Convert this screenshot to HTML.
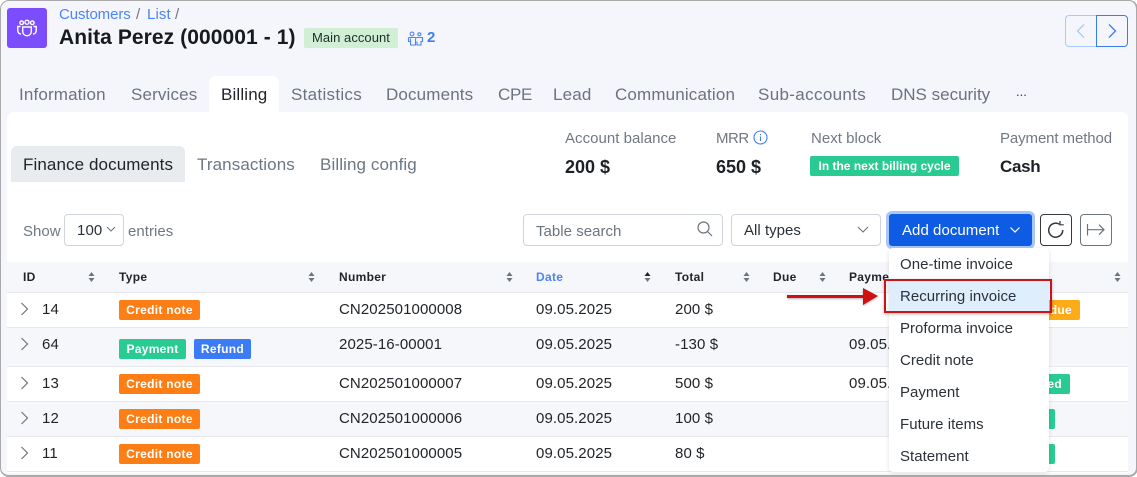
<!DOCTYPE html>
<html><head><meta charset="utf-8"><style>
html,body{margin:0;padding:0;background:#fff}
body{width:1137px;height:476px;overflow:hidden;position:relative;font-family:"Liberation Sans",sans-serif;color:#212529}
#w{position:absolute;left:0;top:0;width:1135px;height:474px;background:#f5f6fb;border:1px solid #a9a9a9;border-width:1px 2px 2px 1px;border-radius:9px;overflow:hidden}
.a{position:absolute}
.t{position:absolute;white-space:nowrap;font-size:15px;line-height:18px;letter-spacing:.1px}
.tab{font-size:17px;letter-spacing:.15px;color:#6b7280;line-height:20px}
.sub{font-size:17px;letter-spacing:.1px;color:#6b7785;line-height:20px}
.lbl{color:#6f7883;font-size:15px;letter-spacing:.03px}
.val{font-size:18px;font-weight:bold;color:#1d2126;letter-spacing:0;line-height:20px}
.th{font-size:12px;font-weight:bold;letter-spacing:.3px;color:#212529}
.b{position:absolute;height:20px;line-height:20px;border-radius:2px;color:#fff;font-size:12px;font-weight:bold;text-align:center;white-space:nowrap;letter-spacing:.3px}
.o{background:#fd7e14;width:81px;left:119px}
.g{background:#2acb92}
.row{position:absolute;left:7px;width:1121px;border-bottom:1px solid #e6e8ee}
.m{position:absolute;left:900px;font-size:15px;letter-spacing:.03px;white-space:nowrap;line-height:18px;color:#2b3138}
svg{position:absolute;overflow:visible}
</style></head><body>
<div id="w"></div>

<!-- logo -->
<div class="a" style="left:7px;top:8px;width:40px;height:40px;background:#7c4dff;border-radius:3px"></div>
<svg style="left:0;top:0" width="60" height="60" fill="none" stroke="#fff" stroke-width="1.400"><circle cx="21.700" cy="22.800" r="1.800"/><circle cx="27" cy="22.200" r="2"/><circle cx="32.300" cy="22.800" r="1.800"/><path d="M22.700 27h8.600v4.500c0 2.500-2 4-4.300 4.300-2.300-.3-4.300-1.800-4.300-4.300z"/><path d="M20.500 26.500h-2.700v4c0 2 1 3.200 3.200 3.700M33.500 26.500h2.700v4c0 2-1 3.200-3.200 3.700"/></svg>

<div class="t" style="left:59px;top:6px;color:#4d84f5;letter-spacing:-.1px">Customers</div>
<div class="t" style="left:136px;top:6px;color:#6c757d">/</div>
<div class="t" style="left:147px;top:6px;color:#4d84f5">List</div>
<div class="t" style="left:175px;top:6px;color:#6c757d">/</div>
<div class="t" style="left:59px;top:26px;font-size:21px;line-height:24px;font-weight:bold;color:#171a1e;letter-spacing:.08px">Anita Perez (000001 - 1)</div>
<div class="a" style="left:304px;top:28px;width:94px;height:20px;background:#d0efd5;border-radius:2px"></div>
<div class="t" style="left:312px;top:29px;font-size:13px;color:#1f2d2a;letter-spacing:.05px">Main account</div>
<svg style="left:0;top:0" width="440" height="50" fill="none" stroke="#4d84f5" stroke-width="1.100"><circle cx="412" cy="34" r="1.900"/><circle cx="419.300" cy="34.300" r="1.500"/><path d="M408.500 37.500h7l.5.500 1-.5h5.500v4h-1.500v3.500h-4v-3.500M410.500 41.500h-2v-4M410.500 38.500v6.500h5v-6.500"/></svg>
<div class="t" style="left:427px;top:29px;font-size:15px;color:#3f7df6;font-weight:bold;letter-spacing:0">2</div>

<!-- prev next -->
<div class="a" style="left:1065px;top:15px;width:31px;height:30px;border:1px solid #a9c8fb;border-right:0;border-radius:4px 0 0 4px"></div>
<div class="a" style="left:1096px;top:15px;width:30px;height:30px;border:1px solid #3b7bf0;border-radius:0 4px 4px 0"></div>
<svg style="left:1076px;top:23px" width="10" height="16" fill="none" stroke="#a9c8fb" stroke-width="1.300"><path d="M8 1.500 1.500 8 8 14.500"/></svg>
<svg style="left:1108px;top:23px" width="10" height="16" fill="none" stroke="#3b7bf0" stroke-width="1.300"><path d="M1 1.500 7.500 8 1 14.500"/></svg>

<!-- tabs -->
<div class="a" style="left:209px;top:76px;width:70px;height:40px;background:#fff;border-radius:7px 7px 0 0"></div>
<div class="t tab" style="left:19px;top:85px">Information</div>
<div class="t tab" style="left:131px;top:85px">Services</div>
<div class="t tab" style="left:221px;top:85px;color:#212529">Billing</div>
<div class="t tab" style="left:291px;top:85px;letter-spacing:.3px">Statistics</div>
<div class="t tab" style="left:386px;top:85px">Documents</div>
<div class="t tab" style="left:498px;top:85px;letter-spacing:-.3px">CPE</div>
<div class="t tab" style="left:553px;top:85px">Lead</div>
<div class="t tab" style="left:615px;top:85px">Communication</div>
<div class="t tab" style="left:758px;top:85px;letter-spacing:.35px">Sub-accounts</div>
<div class="t tab" style="left:891px;top:85px;letter-spacing:0">DNS security</div>
<div class="t" style="left:1016px;top:83px;font-size:13px;color:#27406b;letter-spacing:0">...</div>

<!-- panel -->
<div class="a" style="left:7px;top:112px;width:1121px;height:361px;background:#fff;border-radius:7px 7px 0 0"></div>
<div class="a" style="left:209px;top:106px;width:70px;height:10px;background:#fff"></div>

<div class="a" style="left:11px;top:146px;width:174px;height:36px;background:#e9ecef;border-radius:6px 6px 0 0"></div>
<div class="t sub" style="left:23px;top:155px;color:#212529">Finance documents</div>
<div class="t sub" style="left:197px;top:155px">Transactions</div>
<div class="t sub" style="left:320px;top:155px">Billing config</div>

<div class="t lbl" style="left:565px;top:130px">Account balance</div>
<div class="t lbl" style="left:716px;top:130px;letter-spacing:-.5px">MRR</div>
<svg style="left:753px;top:130px" width="15" height="15" fill="none" stroke="#3f7df6" stroke-width="1.100"><circle cx="7.500" cy="7.500" r="6.500"/><path d="M7.500 6.500v4.500M7.500 4v1.300"/></svg>
<div class="t lbl" style="left:811px;top:130px">Next block</div>
<div class="t lbl" style="left:1000px;top:130px;letter-spacing:-.1px">Payment method</div>
<div class="t val" style="left:565px;top:157px">200 $</div>
<div class="t val" style="left:716px;top:157px">650 $</div>
<div class="b g" style="left:810px;top:156px;width:149px;letter-spacing:0">In the next billing cycle</div>
<div class="t val" style="left:1000px;top:157px;font-size:17px;letter-spacing:-.3px">Cash</div>

<!-- controls -->
<div class="t lbl" style="left:23px;top:223px">Show</div>
<div class="a" style="left:64px;top:214px;width:58px;height:30px;border:1px solid #ced4da;border-radius:4px"></div>
<div class="t" style="left:77px;top:222px;color:#2b3138">100</div>
<svg style="left:106px;top:226px" width="10" height="6" fill="none" stroke="#6c757d"><path d="M1 1l4 4 4-4"/></svg>
<div class="t lbl" style="left:128px;top:223px">entries</div>

<div class="a" style="left:523px;top:214px;width:198px;height:30px;border:1px solid #ced4da;border-radius:4px"></div>
<div class="t" style="left:536px;top:223px;color:#6c757d;letter-spacing:.03px">Table search</div>
<svg style="left:697px;top:221px" width="16" height="16" fill="none" stroke="#6c757d" stroke-width="1.200"><circle cx="6.500" cy="6.500" r="5.500"/><path d="M10.500 10.500l4.500 4.500"/></svg>
<div class="a" style="left:731px;top:214px;width:148px;height:30px;border:1px solid #ced4da;border-radius:4px"></div>
<div class="t" style="left:744px;top:222px;color:#2b3138;letter-spacing:.03px">All types</div>
<svg style="left:857px;top:226px" width="12" height="7" fill="none" stroke="#6c757d" stroke-width="1.100"><path d="M1 1l5 5 5-5"/></svg>

<div class="a" style="left:886px;top:211px;width:149px;height:38px;background:#a9c6f7;border-radius:6px"></div>
<div class="a" style="left:889px;top:214px;width:143px;height:32px;background:#0f5ce4;border-radius:3px"></div>
<div class="t" style="left:902px;top:222px;color:#fff;letter-spacing:.05px">Add document</div>
<svg style="left:1010px;top:227px" width="10" height="6" fill="none" stroke="#fff" stroke-width="1.200"><path d="M.5.500 5 5 9.500.500"/></svg>

<div class="a" style="left:1040px;top:214px;width:30px;height:30px;border:1px solid #343a40;border-radius:4px"></div>
<svg style="left:0;top:0" width="1137" height="260" fill="none" stroke="#343a40" stroke-width="1.500"><path d="M1059.500 224.300A7 7 0 1 0 1062.700 230"/><path d="M1060 221v3.800h3.800" stroke-width="1.200"/></svg>
<div class="a" style="left:1080px;top:214px;width:30px;height:30px;border:1px solid #6c757d;border-radius:4px"></div>
<svg style="left:0;top:0" width="1137" height="260" fill="none" stroke="#6c757d" stroke-width="1.200"><path d="M1087.500 224v11.500M1088 229.700h16M1099 224.700l5 5-5 5"/></svg>

<!-- table -->
<div class="a" style="left:7px;top:262px;width:1121px;height:30px;background:#f6f7fb;border-bottom:1px solid #e6e8ee"></div>
<div class="row" style="top:293px;height:34px;background:#fff"></div>
<div class="row" style="top:328px;height:38px;background:#f6f7fb"></div>
<div class="row" style="top:367px;height:34px;background:#fff"></div>
<div class="row" style="top:402px;height:34px;background:#f6f7fb"></div>
<div class="row" style="top:437px;height:34px;background:#fff"></div>

<div class="t th" style="left:23px;top:268px">ID</div>
<div class="t th" style="left:119px;top:268px">Type</div>
<div class="t th" style="left:339px;top:268px">Number</div>
<div class="t th" style="left:536px;top:268px;color:#4d84f5">Date</div>
<div class="t th" style="left:675px;top:268px">Total</div>
<div class="t th" style="left:773px;top:268px">Due</div>
<div class="t th" style="left:849px;top:268px">Payme</div>

<svg style="left:88px;top:272px" width="7" height="10" fill="#6c757d"><path d="M3.500 0 6.500 4H.5zM3.500 10 .5 6h6z"/></svg>
<svg style="left:308px;top:272px" width="7" height="10" fill="#6c757d"><path d="M3.500 0 6.500 4H.5zM3.500 10 .5 6h6z"/></svg>
<svg style="left:506px;top:272px" width="7" height="10" fill="#6c757d"><path d="M3.500 0 6.500 4H.5zM3.500 10 .5 6h6z"/></svg>
<svg style="left:644px;top:272px" width="7" height="10"><path fill="#212529" d="M3.500 0 6.500 4H.5z"/><path fill="#6c757d" d="M3.500 10 .5 6h6z"/></svg>
<svg style="left:743px;top:272px" width="7" height="10" fill="#6c757d"><path d="M3.500 0 6.500 4H.5zM3.500 10 .5 6h6z"/></svg>
<svg style="left:819px;top:272px" width="7" height="10" fill="#6c757d"><path d="M3.500 0 6.500 4H.5zM3.500 10 .5 6h6z"/></svg>
<svg style="left:1114px;top:272px" width="7" height="10" fill="#6c757d"><path d="M3.500 0 6.500 4H.5zM3.500 10 .5 6h6z"/></svg>

<svg style="left:20px;top:302px" width="9" height="14" fill="none" stroke="#6c757d" stroke-width="1.200"><path d="M1.500 1l6 6-6 6"/></svg>
<svg style="left:20px;top:337px" width="9" height="14" fill="none" stroke="#6c757d" stroke-width="1.200"><path d="M1.500 1l6 6-6 6"/></svg>
<svg style="left:20px;top:376px" width="9" height="14" fill="none" stroke="#6c757d" stroke-width="1.200"><path d="M1.500 1l6 6-6 6"/></svg>
<svg style="left:20px;top:411px" width="9" height="14" fill="none" stroke="#6c757d" stroke-width="1.200"><path d="M1.500 1l6 6-6 6"/></svg>
<svg style="left:20px;top:446px" width="9" height="14" fill="none" stroke="#6c757d" stroke-width="1.200"><path d="M1.500 1l6 6-6 6"/></svg>

<div class="t" style="left:42px;top:301px">14</div>
<div class="t" style="left:42px;top:336px">64</div>
<div class="t" style="left:42px;top:375px">13</div>
<div class="t" style="left:42px;top:410px">12</div>
<div class="t" style="left:42px;top:445px">11</div>

<div class="b o" style="top:300px">Credit note</div>
<div class="b g" style="left:119px;top:339px;width:67px">Payment</div>
<div class="b" style="left:194px;top:339px;width:57px;background:#3b7bf6">Refund</div>
<div class="b o" style="top:374px">Credit note</div>
<div class="b o" style="top:409px">Credit note</div>
<div class="b o" style="top:444px">Credit note</div>

<div class="t" style="left:339px;top:301px">CN202501000008</div>
<div class="t" style="left:339px;top:336px">2025-16-00001</div>
<div class="t" style="left:339px;top:375px">CN202501000007</div>
<div class="t" style="left:339px;top:410px">CN202501000006</div>
<div class="t" style="left:339px;top:445px">CN202501000005</div>

<div class="t" style="left:536px;top:301px">09.05.2025</div>
<div class="t" style="left:536px;top:336px">09.05.2025</div>
<div class="t" style="left:536px;top:375px">09.05.2025</div>
<div class="t" style="left:536px;top:410px">09.05.2025</div>
<div class="t" style="left:536px;top:445px">09.05.2025</div>

<div class="t" style="left:675px;top:301px">200 $</div>
<div class="t" style="left:675px;top:336px">-130 $</div>
<div class="t" style="left:675px;top:375px">500 $</div>
<div class="t" style="left:675px;top:410px">100 $</div>
<div class="t" style="left:675px;top:445px">80 $</div>

<div class="t" style="left:849px;top:336px">09.05.2025</div>
<div class="t" style="left:849px;top:375px">09.05.2025</div>

<!-- status badges behind the dropdown -->
<div class="b" style="left:1020px;top:300px;width:60px;background:#fdab16;text-align:right;padding-right:8px;box-sizing:border-box">due</div>
<div class="b g" style="left:1020px;top:374px;width:50px;text-align:right;padding-right:8px;box-sizing:border-box">ed</div>
<div class="b g" style="left:1020px;top:409px;width:35px"></div>
<div class="b g" style="left:1020px;top:444px;width:35px"></div>

<!-- dropdown -->
<div class="a" style="left:889px;top:248px;width:160px;height:224px;background:#fff;border-radius:4px;box-shadow:0 1px 5px rgba(0,0,0,.12)"></div>
<div class="a" style="left:889px;top:280px;width:160px;height:32px;background:#dfeefd"></div>
<div class="a" style="left:884px;top:279px;width:164px;height:30px;border:2px solid #c8161c;box-shadow:0 1px 3px rgba(0,0,0,.3)"></div>
<div class="m" style="top:256px">One-time invoice</div>
<div class="m" style="top:288px">Recurring invoice</div>
<div class="m" style="top:320px">Proforma invoice</div>
<div class="m" style="top:352px">Credit note</div>
<div class="m" style="top:384px">Payment</div>
<div class="m" style="top:416px">Future items</div>
<div class="m" style="top:448px">Statement</div>

<!-- arrow -->
<svg style="left:786px;top:287px;filter:drop-shadow(0 1px 1px rgba(0,0,0,.3))" width="94" height="20"><path fill="#cf1010" d="M1 8h76V1l15 8-15 9v-7H1z"/></svg>
</body></html>
